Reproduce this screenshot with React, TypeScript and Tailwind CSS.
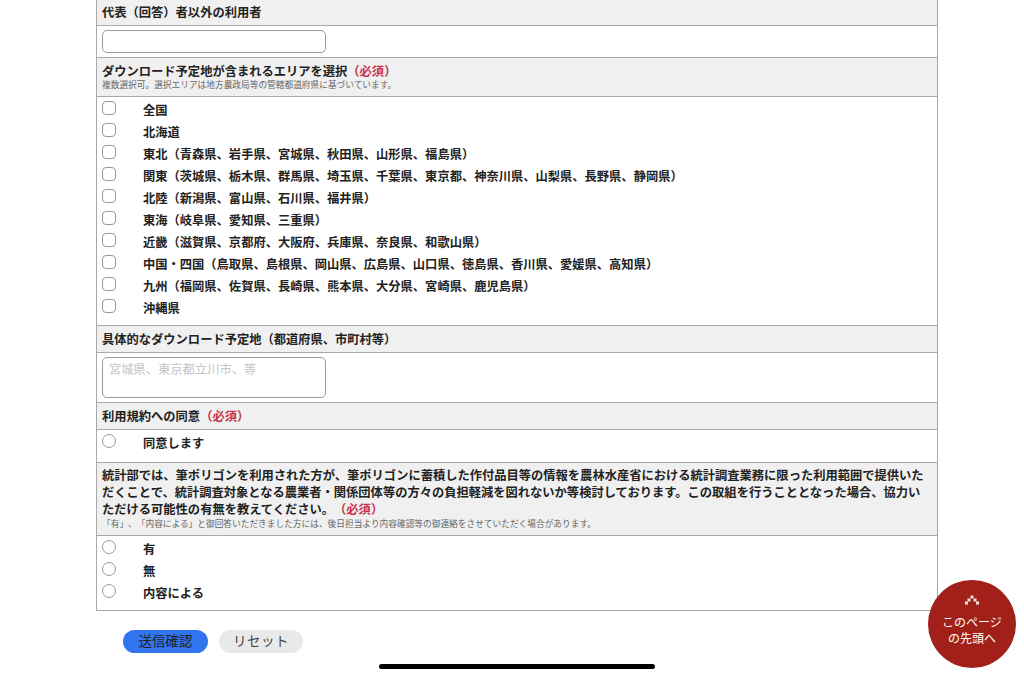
const F = "font-['Noto_Sans_CJK_JP','Noto_Sans_CJK_SC',sans-serif] [text-spacing-trim:space-all]";

function Head({ className, children }: { className: string; children: React.ReactNode }) {
  return <div className={`bg-[#f0f0f0] border-b border-[#a9a9a9] px-[5px] ${className}`}>{children}</div>;
}

const Req = () => <span className="text-[#c8324a]">（必須）</span>;

function Opt({ label, radio }: { label: string; radio?: boolean }) {
  return (
    <div className="h-[22px] flex">
      <div className={`w-[14px] h-[14px] mt-[-2px] border border-[#999999] bg-white shrink-0 ${radio ? "rounded-full" : "rounded-[4px]"}`} />
      <div className="ml-[27px] text-[12.27px] leading-[14px] font-bold text-[#222] whitespace-nowrap">{label}</div>
    </div>
  );
}

const areas = [
  "全国",
  "北海道",
  "東北（青森県、岩手県、宮城県、秋田県、山形県、福島県）",
  "関東（茨城県、栃木県、群馬県、埼玉県、千葉県、東京都、神奈川県、山梨県、長野県、静岡県）",
  "北陸（新潟県、富山県、石川県、福井県）",
  "東海（岐阜県、愛知県、三重県）",
  "近畿（滋賀県、京都府、大阪府、兵庫県、奈良県、和歌山県）",
  "中国・四国（鳥取県、島根県、岡山県、広島県、山口県、徳島県、香川県、愛媛県、高知県）",
  "九州（福岡県、佐賀県、長崎県、熊本県、大分県、宮崎県、鹿児島県）",
  "沖縄県",
];

export default function App() {
  return (
    <div className={`relative w-[1024px] h-[676px] overflow-hidden bg-white ${F}`}>
      <div className="ml-[96px] w-[842px] border-x border-b border-[#a9a9a9] text-[12.27px] text-[#222]">
        <Head className="h-[26px] leading-[24px] font-bold">代表（回答）者以外の利用者</Head>
        <div className="h-[32px] border-b border-[#a9a9a9] px-[5px] pt-[4px]">
          <div className="w-[224px] h-[23px] rounded-[5px] border border-[#9a9a9a] bg-white" />
        </div>
        <Head className="h-[39px] pt-[5px]">
          <div className="leading-[16px] font-bold">ダウンロード予定地が含まれるエリアを選択<Req /></div>
          <div className="text-[8.7px] leading-[11px] text-[#666]">複数選択可。選択エリアは地方農政局等の管轄都道府県に基づいています。</div>
        </Head>
        <div className="h-[229px] border-b border-[#a9a9a9] px-[5px] pt-[6px]">
          {areas.map((a) => <Opt key={a} label={a} />)}
        </div>
        <Head className="h-[27px] leading-[26px] font-bold">具体的なダウンロード予定地（都道府県、市町村等）</Head>
        <div className="h-[50px] border-b border-[#a9a9a9] px-[5px] pt-[4px]">
          <div className="w-[224px] h-[41px] rounded-[5px] border border-[#9a9a9a] bg-white px-[6px] text-[12.27px] leading-[22px] text-[#c4c4c4]">宮城県、東京都立川市、等</div>
        </div>
        <Head className="h-[27px] leading-[26px] font-bold">利用規約への同意<Req /></Head>
        <div className="h-[33px] border-b border-[#a9a9a9] px-[5px] pt-[6px]"><Opt radio label="同意します" /></div>
        <Head className="h-[73px] pt-[4px]">
          <div className="leading-[17px] font-bold">統計部では、筆ポリゴンを利用された方が、筆ポリゴンに蓄積した作付品目等の情報を農林水産省における統計調査業務に限った利用範囲で提供いただくことで、統計調査対象となる農業者・関係団体等の方々の負担軽減を図れないか等検討しております。この取組を行うこととなった場合、協力いただける可能性の有無を教えてください。<Req /></div>
          <div className="text-[8.7px] leading-[11px] text-[#666]">「有」、「内容による」と御回答いただきました方には、後日担当より内容確認等の御連絡をさせていただく場合があります。</div>
        </Head>
        <div className="h-[74px] px-[5px] pt-[6px]">
          <Opt radio label="有" />
          <Opt radio label="無" />
          <Opt radio label="内容による" />
        </div>
      </div>

      <div className="flex gap-[11px] ml-[123px] mt-[19px]">
        <button className="w-[85px] h-[23px] pb-[2px] rounded-full bg-[#3074f0] text-[13.5px] leading-[21px] text-[#222]">送信確認</button>
        <button className="w-[84px] h-[23px] pb-[2px] rounded-full bg-[#e9e9e9] text-[13.5px] leading-[21px] tracking-[0.5px] text-[#444]">リセット</button>
      </div>

      <div className="absolute left-[379px] top-[664px] w-[276px] h-[5px] rounded-full bg-black" />

      <div className="absolute left-[928px] top-[580px] w-[88px] h-[88px] rounded-full bg-[#a2201a] flex flex-col items-center text-white text-[12px] leading-[16px]">
        <svg className="mt-[15px]" width="14" height="10" viewBox="0 0 14 10" fill="#f4e4e0">
          <rect x="5.5" y="0.5" width="3" height="3" />
          <rect x="2.5" y="3.5" width="3" height="3" />
          <rect x="8.5" y="3.5" width="3" height="3" />
          <rect x="0" y="6.5" width="3" height="3" />
          <rect x="11" y="6.5" width="3" height="3" />
        </svg>
        <div className="mt-[9px] text-center whitespace-nowrap">このページ<br />の先頭へ</div>
      </div>
    </div>
  );
}
